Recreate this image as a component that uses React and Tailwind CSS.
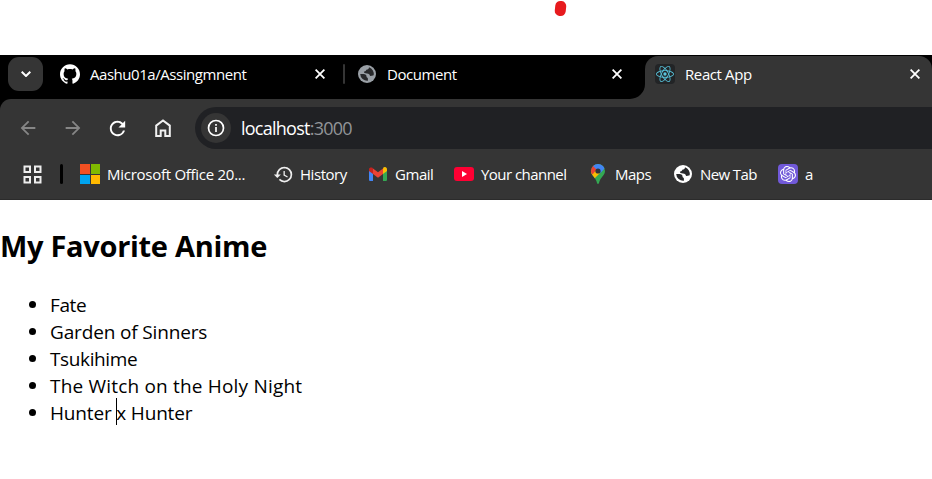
import React from "react";
import { SiGithub, SiReact, SiOpenai } from "react-icons/si";
import { MdHistory, MdArrowBack, MdArrowForward, MdRefresh } from "react-icons/md";

function Globe({ className }) {
  return (
    <svg viewBox="0 0 18 18" className={className} fill="none">
      <circle cx="9" cy="9" r="9" fill="currentColor" />
      <path d="M11 2.300C11 4 10 4.700 8.300 4.800 8.100 6.100 7.300 6.500 5.900 6.600c0 1.500 1 1.900 3.100 1.900 1.900 0 2.900.9 3 2.400 1.300 0 2.500-.2 3.700-.6A7 7 0 0 0 11 2.300ZM2.200 9h3.100c2.300 0 3.300.9 3.200 2.500 0 1.200 1.400 1 1.400 2.100v2.100A7 7 0 0 1 2.200 9Z" fill="#28292b" />
    </svg>
  );
}

function Close() {
  return (
    <svg viewBox="0 0 10 10" className="size-2.5 shrink-0" stroke="#fff" strokeWidth="1.8">
      <path d="m.6.6 8.800 8.800M9.400.6.6 9.400" />
    </svg>
  );
}

function Home() {
  return (
    <svg viewBox="0 0 16 18" className="h-[18px] w-4" fill="none" stroke="#f1f1f1" strokeWidth="2">
      <path d="M1.200 6.600 8 1.500l6.800 5.100V17h-4.500v-5.500H5.700V17H1.200Z" />
    </svg>
  );
}

function Windows() {
  return (
    <div className="grid size-5 grid-cols-2 gap-px">
      <i className="bg-[#f25022]" />
      <i className="bg-[#7fba00]" />
      <i className="bg-[#00a4ef]" />
      <i className="bg-[#ffb900]" />
    </div>
  );
}

function Gmail() {
  return (
    <svg viewBox="0 0 18 14" className="h-3.5 w-[18px]">
      <path d="M0 3v9.700c0 .7.600 1.300 1.300 1.300H4V5Z" fill="#4285f4" />
      <path d="M14 5v9h2.700c.7 0 1.300-.6 1.300-1.300V3Z" fill="#34a853" />
      <path d="M14 1.500V7l4-3V2.200c0-2-2.300-2.900-3.600-1.600Z" fill="#fbbc04" />
      <path d="M4 7V1.400l5 3.800 5-3.800V7l-5 3.700Z" fill="#ea4335" />
      <path d="M0 2.200V4l4 3V1.400L3.400.8C2 0 0 .7 0 2.200Z" fill="#c5221f" />
    </svg>
  );
}

function YouTube() {
  return (
    <svg viewBox="0 0 20 14" className="h-3.5 w-5">
      <rect width="20" height="14" rx="3" fill="#ff0033" />
      <path d="m8 4 5 3-5 3Z" fill="#fff" />
    </svg>
  );
}

function Maps() {
  return (
    <svg viewBox="0 0 14 20" className="h-5 w-3.5">
      <defs>
        <clipPath id="pin">
          <path d="M7 0a7 7 0 0 1 7 7c0 4-4 6-5.500 10.200C8 19 7.800 20 7 20s-1-1-1.500-2.800C4 13 0 11 0 7a7 7 0 0 1 7-7Z" />
        </clipPath>
      </defs>
      <g clipPath="url(#pin)">
        <path d="M0 0h14v20H0Z" fill="#34a853" />
        <path d="M0 6v8l3 1 6-6-4-4Z" fill="#fbbc04" />
        <path d="M0 0h3l4 4-5.500 6.500L0 9Z" fill="#ea4335" />
        <path d="M2 2 4 0h10v4L9.500 9 6 6Z" fill="#4285f4" />
      </g>
      <circle cx="7" cy="7" r="2.600" fill="#30343c" />
    </svg>
  );
}

const bookmarks = [
  { icon: <Windows />, label: "Microsoft Office 20...", box: "w-5", item: "w-[193px]", text: "ml-[7px] tracking-[-0.27px]" },
  { icon: <MdHistory className="size-[21px] shrink-0 text-[#eee]" />, label: "History", box: "w-5", item: "w-24", text: "ml-[7px] tracking-[-0.45px]" },
  { icon: <Gmail />, label: "Gmail", box: "w-[18px]", item: "w-[85px]", text: "ml-2 tracking-[-0.45px]" },
  { icon: <YouTube />, label: "Your channel", box: "w-5", item: "w-[137px]", text: "ml-[7px] tracking-[-0.54px]" },
  { icon: <Maps />, label: "Maps", box: "w-3.5", item: "w-[83px]", text: "ml-2.5 tracking-[-0.5px]" },
  { icon: <Globe className="size-[18px] text-white" />, label: "New Tab", box: "w-[18px]", item: "w-[104px]", text: "ml-2 tracking-[-0.6px]" },
  { icon: <div className="grid size-5 place-items-center rounded bg-[#7159d9]"><SiOpenai className="size-4 text-white" /></div>, label: "a", box: "w-5", item: "w-10", text: "ml-[7px]" },
];

const shows = [
  { name: "Fate", text: "tracking-[-0.4px]" },
  { name: "Garden of Sinners", text: "tracking-[-0.15px]" },
  { name: "Tsukihime", text: "tracking-[-0.38px]" },
  { name: "The Witch on the Holy Night", text: "tracking-[0.19px]" },
];

export default function App() {
  return (
    <div className="h-[479px] w-[932px] overflow-hidden bg-white font-['Open_Sans','Noto_Sans',sans-serif] text-black">
      <div className="h-[55px] pl-[555px] pt-px">
        <div className="h-[15px] w-[11px] rotate-6 rounded-[5px] bg-[#e71b1e]" />
      </div>

      <header className="h-[145px] bg-[#353535] text-[15px] text-white">
        <div className="flex h-11 bg-black">
          <div className="flex h-[38px] w-[645px] items-center">
            <button className="ml-2 grid h-[34px] w-[35px] shrink-0 place-items-center rounded-[11px] bg-[#353535]">
              <svg viewBox="0 0 10 6" className="h-1.5 w-2.5" fill="none" stroke="#fff" strokeWidth="2"><path d="m.7.7 4.300 4.300L9.300.7" /></svg>
            </button>
            <SiGithub className="ml-[17px] size-5 shrink-0" />
            <span className="ml-2.5 w-[225px] shrink-0 whitespace-nowrap tracking-[-0.45px]">Aashu01a/Assingmnent</span>
            <Close />
            <div className="ml-[18px] h-5 w-0.5 shrink-0 rounded bg-[#353535]" />
            <Globe className="ml-[13px] size-[18px] shrink-0 text-[#9aa0a6]" />
            <span className="ml-[11px] w-[225px] shrink-0 tracking-[-0.45px]">Document</span>
            <Close />
          </div>
          <div className="relative mt-px flex h-[43px] w-[287px] rounded-t-[13px] bg-[#353535]">
            <svg viewBox="0 0 15 15" className="absolute -left-[15px] bottom-0 size-[15px]"><path d="M15 0v15H0A15 15 0 0 0 15 0Z" fill="#353535" /></svg>
            <div className="flex h-9 items-center">
              <div className="ml-2.5 grid size-5 place-items-center rounded-sm bg-[#222426]"><SiReact className="size-[18px] text-[#58c4dc]" /></div>
              <span className="ml-2.5 w-[225px] tracking-[-0.4px]">React App</span>
              <Close />
            </div>
          </div>
        </div>
        <div className="h-[100px] bg-black">
          <div className="h-full rounded-tl-[11px] bg-[#353535] pt-2">
            <div className="flex h-[42px] items-center">
              <MdArrowBack className="ml-[17px] size-[22px] text-[#868686]" />
              <MdArrowForward className="ml-[23px] size-[22px] text-[#868686]" />
              <MdRefresh className="ml-[22px] size-[23px]" />
              <div className="ml-[26px]"><Home /></div>
              <div className="ml-6 flex h-[42px] flex-1 items-center rounded-l-full bg-[#202124] pl-1.5">
                <div className="grid size-[30px] place-items-center rounded-full bg-[#353535]">
                  <svg viewBox="0 0 18 18" className="size-[18px]" fill="none" stroke="#fff" strokeWidth="1.700"><circle cx="9" cy="9" r="7.500" /><path d="M9 8v5M9 5v1.700" /></svg>
                </div>
                <span className="ml-2.5 text-[18px] tracking-[-0.75px]">localhost<span className="text-[#929498]">:3000</span></span>
              </div>
            </div>
            <div className="flex h-[50px] items-center pl-[23px]">
              <svg viewBox="0 0 19 19" className="size-[19px] shrink-0" fill="none" stroke="#eee" strokeWidth="2"><path d="M1.500 1.500H7V7H1.500ZM12 1.500h5.500V7H12ZM1.500 12H7v5.500H1.500ZM12 12h5.500v5.500H12Z" /></svg>
              <div className="ml-[18px] mr-[17px] h-5 w-[3px] shrink-0 rounded bg-black" />
              {bookmarks.map((b) => (
                <div key={b.label} className={`flex shrink-0 items-center ${b.item}`}>
                  <div className={`flex shrink-0 justify-center ${b.box}`}>{b.icon}</div>
                  <span className={`whitespace-nowrap ${b.text}`}>{b.label}</span>
                </div>
              ))}
            </div>
          </div>
        </div>
        <div className="h-px bg-[#2b2b2b]" />
      </header>

      <main>
        <h2 className="mt-[26px] h-10 whitespace-nowrap text-[29px] font-bold leading-10 tracking-[-0.3px]">My Favorite Anime</h2>
        <ul className="mt-[25px] list-disc pl-[50px] text-[20px] leading-[27px]">
          {shows.map((s) => (
            <li key={s.name} className="h-[27px]"><span className={`text-[19px] leading-none ${s.text}`}>{s.name}</span></li>
          ))}
          <li className="h-[27px]">
            <span className="text-[19px] leading-none tracking-[-0.17px]">
              <span className="relative">Hunter <i className="absolute -right-px -top-0.5 h-[27px] w-px bg-black" /></span>x Hunter
            </span>
          </li>
        </ul>
      </main>
    </div>
  );
}
